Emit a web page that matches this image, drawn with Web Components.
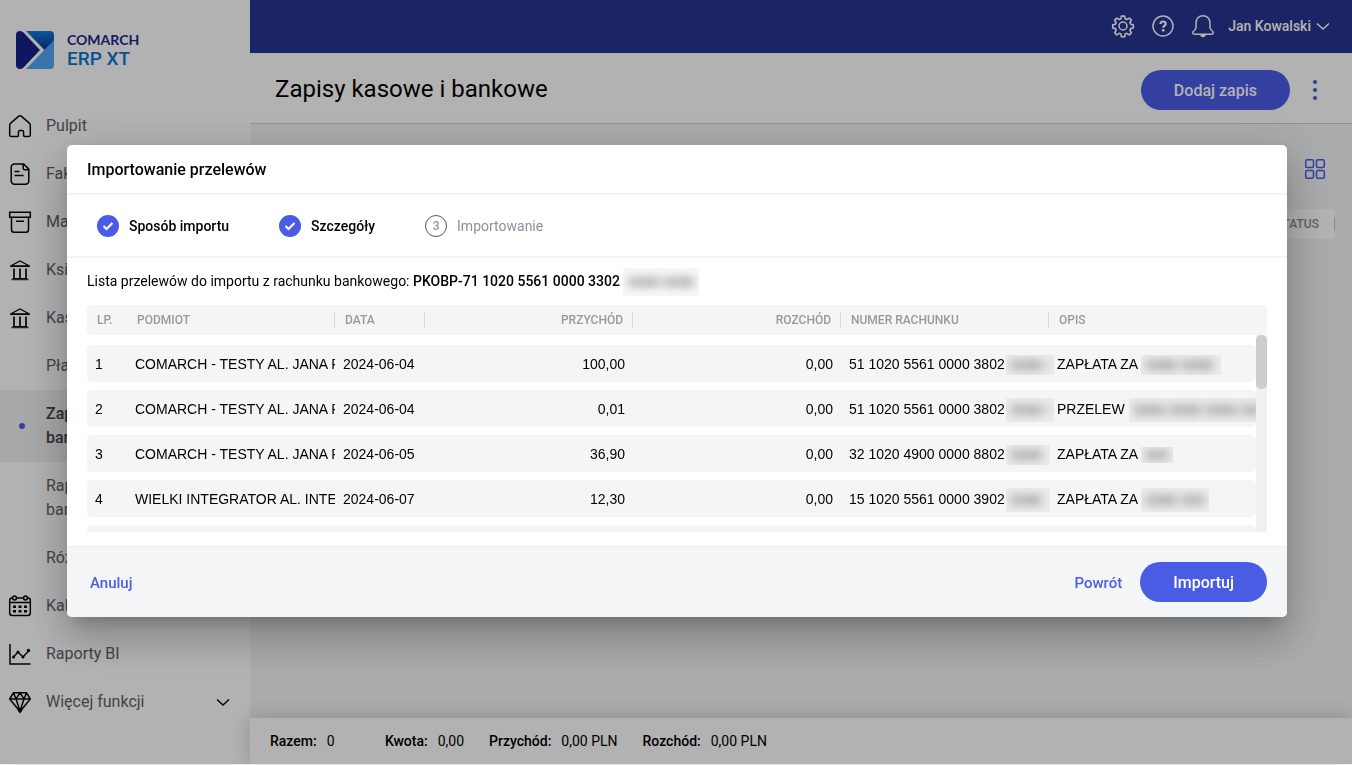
<!DOCTYPE html>
<html lang="pl">
<head>
<meta charset="utf-8">
<meta name="viewport" content="width=device-width, initial-scale=1">
<title>Zapisy kasowe i bankowe</title>
<style>
  body {
    background: #fff;
    color: #000;
    font: 14px/16px Roboto, sans-serif;
    margin: 0;
    padding-bottom: 1px;
  }
</style>
</head>
<body>
<xt-app>
  <xt-sidebar slot="sidebar">
    <xt-nav-item icon="home">Pulpit</xt-nav-item>
    <xt-nav-item icon="invoice">Faktury</xt-nav-item>
    <xt-nav-item icon="box">Magazyn</xt-nav-item>
    <xt-nav-item icon="bank">Księgowość</xt-nav-item>
    <xt-nav-item icon="bank">Kasa/Bank</xt-nav-item>
    <xt-nav-item>Płatności</xt-nav-item>
    <xt-nav-item active>Zapisy kasowe i bankowe</xt-nav-item>
    <xt-nav-item>Raporty kasowe i bankowe</xt-nav-item>
    <xt-nav-item>Różnice kursowe</xt-nav-item>
    <xt-nav-item icon="calendar">Kalendarz</xt-nav-item>
    <xt-nav-item icon="chart">Raporty BI</xt-nav-item>
    <xt-nav-item icon="diamond" expandable>Więcej funkcji</xt-nav-item>
  </xt-sidebar>
  <xt-topbar user="Jan Kowalski"></xt-topbar>
  <xt-page-header>
    Zapisy kasowe i bankowe
    <xt-button slot="actions">Dodaj zapis</xt-button>
  </xt-page-header>
  <xt-list-view></xt-list-view>
  <xt-summary></xt-summary>
</xt-app>

<xt-dialog heading="Importowanie przelewów">
  <xt-step slot="steps" done>Sposób importu</xt-step>
  <xt-step slot="steps" done>Szczegóły</xt-step>
  <xt-step slot="steps" number="3">Importowanie</xt-step>
  <xt-transfers account="PKOBP-71 1020 5561 0000 3302"></xt-transfers>
  <xt-button slot="cancel" kind="link">Anuluj</xt-button>
  <xt-button slot="confirm" kind="link">Powrót</xt-button>
  <xt-button slot="confirm">Importuj</xt-button>
</xt-dialog>

<script>
(function() {
  const ICONS = {
    home: '<path d="M1.700 21V11.200c0-.8.3-1.600 1-2.100l7.500-6.500c1-.9 2.600-.9 3.600 0l7.500 6.500c.7.5 1 1.300 1 2.100V21c0 .9-.7 1.600-1.600 1.600h-4.100c-.6 0-1-.4-1-1v-3.400c0-.9-.7-1.600-1.600-1.600h-2c-.9 0-1.600.7-1.600 1.600v3.400c0 .6-.4 1-1 1H3.300c-.9 0-1.600-.7-1.600-1.600z"/>',
    invoice: '<path d="M6.500 2h9.200l5.100 5.100v11.900a3.300 3.300 0 0 1-3.300 3.300h-11a3.300 3.300 0 0 1-3.300-3.300V5.300A3.300 3.300 0 0 1 6.500 2z"/><path d="M15.200 2v4.200c0 .9.7 1.600 1.600 1.600h4M6.500 9.500h5M6.500 13.500h9"/>',
    box: '<path d="M1.700 2.300h20.600v5H1.700zM3.500 7.300v12.400c0 1.400 1.100 2.500 2.500 2.500h12c1.400 0 2.500-1.100 2.500-2.500V7.300M8 11.200h8"/>',
    bank: '<path d="M2.500 8 12 3l9.500 5z" stroke-width="1.300"/><path d="M2 8.500h20M4.500 20.500h15M3.500 21.700h17" stroke-width="1"/><path d="M6 10.500v9.500M12 10.500v9.500M18 10.500v9.500" stroke-width="1.700"/>',
    calendar: '<rect x="1.700" y="4" width="20.600" height="17.500" rx="2.500"/><path d="M2 8.500h20"/><circle cx="6.500" cy="4" r="1.900" fill="#fff"/><circle cx="17.500" cy="4" r="1.900" fill="#fff"/><path d="M5 12.700h3m2.500 0h3m2.500 0h3M5 17.200h3m2.500 0h3m2.500 0h3" stroke-width="2.600"/>',
    chart: '<path d="M2 2v20h20.500M5.500 15l4.500-5 5 5 5.500-6"/><g fill="currentColor" stroke="none"><circle cx="5.500" cy="15" r="1.500"/><circle cx="10" cy="10" r="1.500"/><circle cx="15" cy="15" r="1.500"/><circle cx="20.500" cy="8.500" r="1.700"/></g>',
    diamond: '<path d="M5.500 2.800h13L22.300 9 12 21.500 1.700 9zM2 9h20M5.500 3 8 8.800l4-6 4 6L18.500 3M8 9l4 12 4-12"/><path d="m10.500 19.500 1.500 2 1.500-2" stroke-width="2.500"/>',
    gear: '<path d="M10.300 1.800h3.400l.7 2.900 1.800.8 2.600-1.600 2.300 2.300-1.600 2.600.8 1.800 2.900.7v3.400l-2.900.7-.8 1.800 1.600 2.600-2.300 2.300-2.600-1.600-1.800.8-.7 2.900h-3.400l-.7-2.900-1.800-.8-2.600 1.600-2.300-2.300 1.600-2.600-.8-1.800-2.900-.7v-3.400l2.900-.7.8-1.800-1.600-2.600 2.300-2.300 2.600 1.600 1.800-.8z" transform="translate(1 .5) scale(.92)" stroke-width="1.800" stroke-linejoin="round"/><circle cx="12" cy="12" r="4"/>',
    help: '<circle cx="12" cy="12" r="10"/><path d="M9.500 10c0-3.300 5.200-3.200 5.200-.3 0 1.900-2.500 1.900-2.500 4" stroke-width="2.200"/><circle cx="12.200" cy="16.300" r="1.400" fill="currentColor" stroke="none"/>',
    bell: '<path d="M12 1.700c-4.200 0-7 3.200-7 7.300v4.500c0 1-.4 1.700-1.300 2.500-1.200 1-2 1.700-2 2.800 0 .9.7 1.400 1.600 1.400h17.400c.9 0 1.600-.5 1.600-1.400 0-1.100-.8-1.800-2-2.800-.9-.8-1.300-1.500-1.300-2.500V9c0-4.100-2.800-7.300-7-7.300z"/><path d="M9.300 20.500h5.400a2.700 2.700 0 0 1-5.400 0z" fill="currentColor" stroke="none"/>',
    chevron: '<path d="m6 9.500 6 5.500 6-5.500"/>',
    more: '<g fill="currentColor" stroke="none"><circle cx="12" cy="4" r="2.100"/><circle cx="12" cy="12" r="2.100"/><circle cx="12" cy="20" r="2.100"/></g>',
    grid: '<rect x="2.700" y="2.700" width="7.800" height="7.800" rx="1.500"/><rect x="13.500" y="2.700" width="7.800" height="7.800" rx="1.500"/><rect x="2.700" y="13.500" width="7.800" height="7.800" rx="1.500"/><rect x="13.500" y="13.500" width="7.800" height="7.800" rx="1.500"/>'
  };

  function icon(name) {
    return `<svg class="icon" width="24" height="24" viewBox="0 0 24 24" fill="none" stroke="currentColor" stroke-width="1.500" aria-hidden="true">${ICONS[name]}</svg>`;
  }

  class XtElement extends HTMLElement {
    connectedCallback() {
      if (this.shadowRoot) {
        return;
      }
      this._root = this.attachShadow({mode: 'open'});
      this._root.innerHTML = `<style>.icon { display: block; flex: none; }</style>` + this.render();
      this.ready();
    }

    ready() {}
  }

  class XtApp extends XtElement {
    render() {
      return `<style>
          :host {
            display: grid;
            grid-template-columns: 250px 1fr;
            min-height: calc(100vh - 1px);
          }
          main {
            background: #f4f5f7;
            display: flex;
            flex-direction: column;
            min-width: 0;
          }
        </style>
        <slot name="sidebar"></slot>
        <main><slot></slot></main>`;
    }
  }

  class XtSidebar extends XtElement {
    render() {
      return `<style>
          :host {
            background: #fff;
            box-shadow: 0 0 20px rgba(0, 0, 0, .2);
            display: block;
          }
          .logo {
            align-items: center;
            box-sizing: border-box;
            display: flex;
            gap: 13px;
            height: 102px;
            padding: 0 16px 2px;
          }
          .logo svg {
            display: block;
          }
          .company {
            color: #1a2a8f;
            display: block;
            font: 700 14px/18px Lato, sans-serif;
          }
          .product {
            color: #0b74d1;
            display: block;
            font-size: 19px;
            font-weight: 500;
            line-height: 20px;
          }
        </style>
        <div class="logo">
          <svg width="38" height="38" viewBox="0 0 38 38" aria-hidden="true">
            <defs>
              <linearGradient id="shade" x1="0" y1="0" x2="0" y2="1">
                <stop offset="0" stop-color="#0b80e0"/>
                <stop offset="1" stop-color="#13308f"/>
              </linearGradient>
            </defs>
            <path d="M10 0h24a4 4 0 0 1 4 4v6L28.500 19z" fill="url(#shade)"/>
            <path d="M38 9v25a4 4 0 0 1-4 4H10z" fill="#50a7f5"/>
            <path d="M0 4a4 4 0 0 1 4-4q2 0 3.500 1.500L24 19 7.500 36.500Q6 38 4 38a4 4 0 0 1-4-4z" fill="#17218b"/>
          </svg>
          <div><span class="company">COMARCH</span><span class="product">ERP XT</span></div>
        </div>
        <nav><slot></slot></nav>`;
    }
  }

  class XtNavItem extends XtElement {
    render() {
      const lead = this.hasAttribute('active') ? '<i class="dot"></i>' :
        this.hasAttribute('icon') ? icon(this.getAttribute('icon')) : '';
      return `<style>
          :host {
            display: block;
          }
          :host([active]) {
            background: #f1f1f1;
            font-weight: 500;
          }
          a {
            align-items: center;
            color: #5f6066;
            display: grid;
            font-size: 16px;
            gap: 14px;
            grid-template-columns: 24px 1fr 24px;
            line-height: 24px;
            padding: 12px 15px 12px 8px;
            text-decoration: none;
          }
          :host([active]) a {
            color: #444;
          }
          .lead, .trail {
            color: #05050f;
          }
          .dot {
            background: #4a5ce4;
            border-radius: 50%;
            display: block;
            height: 6px;
            margin: 0 auto 0 11px;
            width: 6px;
          }
        </style>
        <a href="#">
          <span class="lead">${lead}</span>
          <span><slot></slot></span>
          <span class="trail">${this.hasAttribute('expandable') ? icon('chevron') : ''}</span>
        </a>`;
    }
  }

  class XtTopbar extends XtElement {
    render() {
      return `<style>
          :host {
            align-items: center;
            background: #283593;
            box-sizing: border-box;
            color: #fff;
            display: flex;
            gap: 16px;
            height: 53px;
            justify-content: flex-end;
            padding: 0 17px 2px;
          }
          button {
            align-items: center;
            background: none;
            border: 0;
            color: inherit;
            display: flex;
            font: 500 14px/16px Roboto, sans-serif;
            padding: 0;
          }
          .user {
            margin-left: -3px;
          }
        </style>
        <button aria-label="Ustawienia">${icon('gear')}</button>
        <button aria-label="Pomoc">${icon('help')}</button>
        <button aria-label="Powiadomienia">${icon('bell')}</button>
        <button class="user">${this.getAttribute('user')}${icon('chevron')}</button>`;
    }
  }

  class XtPageHeader extends XtElement {
    render() {
      return `<style>
          :host {
            align-items: center;
            background: #fff;
            border-bottom: 1px solid #d0d1d4;
            display: flex;
            gap: 13px;
            min-height: 66px;
            padding: 4px 25px 0;
          }
          h1 {
            flex: 1;
            font-size: 24px;
            font-weight: 400;
            line-height: 32px;
            margin: 0 0 2px;
          }
          .more {
            background: none;
            border: 0;
            color: #4a5ce4;
            padding: 0;
          }
        </style>
        <h1><slot></slot></h1>
        <slot name="actions"></slot>
        <button class="more" aria-label="Więcej">${icon('more')}</button>`;
    }
  }

  class XtButton extends XtElement {
    render() {
      return `<style>
          :host {
            display: inline-block;
          }
          button {
            background: #4a5ce4;
            border: 0;
            border-radius: 20px;
            color: #fff;
            cursor: pointer;
            display: block;
            font: 500 16px/20px Roboto, sans-serif;
            padding: 11px 33px 9px;
          }
          :host([kind=link]) button {
            background: none;
            color: #4a5ce4;
            font-size: 15px;
            padding: 11px 3px 9px;
          }
        </style>
        <button><slot></slot></button>`;
    }
  }

  class XtListView extends XtElement {
    render() {
      return `<style>
          :host {
            display: block;
            flex: 1;
            padding: 33px 17px 20px 20px;
          }
          .view {
            background: none;
            border: 0;
            color: #4a5ce4;
            display: block;
            margin: 0 8px 0 auto;
            padding: 0;
          }
          .head {
            background: #fff;
            border-radius: 4px;
            color: #8c8c8c;
            font-size: 12px;
            font-weight: 500;
            line-height: 14px;
            margin-top: 28px;
            padding: 8px 0;
            text-align: right;
          }
          .head span {
            border-right: 1px solid #c4c4c4;
            display: block;
            padding-right: 15px;
          }
        </style>
        <button class="view" aria-label="Widok">${icon('grid')}</button>
        <div class="head"><span>STATUS</span></div>`;
    }
  }

  class XtSummary extends XtElement {
    render() {
      const totals = [['Razem:', '0'], ['Kwota:', '0,00'], ['Przychód:', '0,00 PLN'], ['Rozchód:', '0,00 PLN']];
      return `<style>
          :host {
            background: #fff;
            box-shadow: 0 0 20px rgba(0, 0, 0, .2);
            display: block;
            padding: 15px 20px;
            position: relative;
          }
          dl {
            display: flex;
            gap: 25px;
            margin: 0;
          }
          div {
            display: flex;
            gap: 10px;
          }
          div:first-child {
            min-width: 90px;
          }
          dt {
            font-weight: 500;
          }
          dd {
            margin: 0;
          }
        </style>
        <dl>${totals.map(t => `<div><dt>${t[0]}</dt><dd>${t[1]}</dd></div>`).join('')}</dl>`;
    }
  }

  class XtDialog extends XtElement {
    render() {
      return `<style>
          :host {
            align-items: center;
            background: rgba(0, 0, 0, .3);
            box-sizing: border-box;
            display: flex;
            inset: 0 0 1px;
            justify-content: center;
            padding: 0 0 2px 2px;
            position: fixed;
            z-index: 10;
          }
          section {
            background: #fff;
            border-radius: 5px;
            box-shadow: 0 11px 15px -7px rgba(0, 0, 0, .2), 0 24px 38px 3px rgba(0, 0, 0, .14), 0 9px 46px 8px rgba(0, 0, 0, .12);
            max-width: 1220px;
            overflow: hidden;
            width: calc(100% - 120px);
          }
          h2 {
            border-bottom: 2px solid #f1f2f3;
            font-size: 16px;
            font-weight: 500;
            line-height: 20px;
            margin: 0;
            padding: 15px 20px 13px;
          }
          .steps {
            border-bottom: 2px solid #f1f2f3;
            display: flex;
            gap: 50px;
            padding: 20px 30px 19px;
          }
          .body {
            padding: 15px 20px 14px;
          }
          footer {
            align-items: center;
            background: #f4f5f7;
            border-top: 1px solid #ebecee;
            display: flex;
            gap: 15px;
            padding: 15px 20px;
          }
          .space {
            flex: 1;
          }
        </style>
        <section role="dialog" aria-label="${this.getAttribute('heading')}">
          <h2>${this.getAttribute('heading')}</h2>
          <div class="steps"><slot name="steps"></slot></div>
          <div class="body"><slot></slot></div>
          <footer>
            <slot name="cancel"></slot>
            <span class="space"></span>
            <slot name="confirm"></slot>
          </footer>
        </section>`;
    }
  }

  class XtStep extends XtElement {
    render() {
      const mark = this.hasAttribute('done') ?
        '<svg width="22" height="22" viewBox="0 0 22 22" aria-hidden="true"><path d="m6.500 11 3 3 6-6" fill="none" stroke="#fff" stroke-width="2"/></svg>' :
        this.getAttribute('number');
      return `<style>
          :host {
            align-items: center;
            color: #8a929c;
            display: flex;
            gap: 10px;
          }
          :host([done]) {
            color: #000;
            font-weight: 500;
          }
          .mark {
            border: 1px solid #555;
            border-radius: 50%;
            box-sizing: border-box;
            font-size: 12px;
            font-weight: 500;
            height: 22px;
            line-height: 20px;
            text-align: center;
            width: 22px;
          }
          :host([done]) .mark {
            background: #4a5ce4;
            border: 0;
          }
          svg {
            display: block;
          }
        </style>
        <span class="mark">${mark}</span>
        <span><slot></slot></span>`;
    }
  }

  class XtRedacted extends XtElement {
    render() {
      const height = this.getAttribute('height') || 20;
      return `<style>
          :host {
            background: var(--patch, #ebecee);
            display: inline-block;
            height: ${height}px;
            overflow: hidden;
            vertical-align: middle;
            width: ${this.getAttribute('width')}px;
          }
          i {
            background: repeating-linear-gradient(90deg, #999 0 10px, #a8a8a8 10px 14px, #959595 14px 30px, #ddd 30px 36px);
            display: block;
            filter: blur(5px);
            height: 10px;
            margin: ${(height - 10) >> 1}px 5px;
            opacity: .7;
          }
        </style>
        <i></i>`;
    }
  }

  class XtTransfers extends XtElement {
    render() {
      const columns = ['LP.', 'PODMIOT', 'DATA', 'PRZYCHÓD', 'ROZCHÓD', 'NUMER RACHUNKU', 'OPIS'];
      // party, date, income, expense, account, account patch, description, description patch
      const rows = [
        ['COMARCH - TESTY AL. JANA PAWŁA II', '2024-06-04', '100,00', '0,00', '51 1020 5561 0000 3802', [48, 20], 'ZAPŁATA ZA', [80, 20]],
        ['COMARCH - TESTY AL. JANA PAWŁA II', '2024-06-04', '0,01', '0,00', '51 1020 5561 0000 3802', [48, 24], 'PRZELEW', [136, 24]],
        ['COMARCH - TESTY AL. JANA PAWŁA II', '2024-06-05', '36,90', '0,00', '32 1020 4900 0000 8802', [44, 20], 'ZAPŁATA ZA', [32, 16]],
        ['WIELKI INTEGRATOR AL. INTEGRACJI', '2024-06-07', '12,30', '0,00', '15 1020 5561 0000 3902', [44, 24], 'ZAPŁATA ZA', [68, 24]],
        ['COMARCH', '2024-06-07', '10,00', '0,00', '15 1020 5561 0000 3902', [44, 24], 'ZAPŁATA ZA', [68, 24]]
      ];
      const patch = p => `<xt-redacted width="${p[0]}" height="${p[1]}"></xt-redacted>`;
      return `<style>
          :host {
            display: block;
          }
          p {
            margin: 0 0 16px;
          }
          b {
            font-weight: 500;
          }
          p xt-redacted {
            --patch: #f8f8f8;
            margin: -8px 0;
          }
          .scroller {
            position: relative;
          }
          table, thead, tbody {
            display: block;
          }
          tr {
            background: #f4f5f7;
            border-radius: 5px;
            display: grid;
            grid-template-columns: 40px 208px 90px 208px 208px 208px 1fr;
          }
          thead tr {
            align-items: center;
            height: 30px;
          }
          th {
            border-right: 1px solid #d8d9dc;
            color: #999;
            font-size: 12px;
            font-weight: 500;
            padding: 0 10px;
            text-align: left;
          }
          th:first-child, th:last-child {
            border-color: transparent;
          }
          th:nth-child(4), th:nth-child(5),
          td:nth-child(4), td:nth-child(5) {
            text-align: right;
          }
          th:nth-child(4), th:nth-child(5) {
            padding-right: 9px;
          }
          tbody {
            height: 197px;
            overflow: hidden auto;
            padding-right: 11px;
            scrollbar-width: none;
            box-sizing: border-box;
          }
          tbody tr {
            font-family: "Liberation Sans", Arial, sans-serif;
            height: 37px;
            margin-top: 8px;
            overflow: hidden;
          }
          tbody tr:first-child {
            margin-top: 10px;
          }
          td {
            line-height: 38px;
            overflow: hidden;
            padding: 0 8px;
            white-space: nowrap;
          }
          td:nth-child(6) {
            overflow: visible;
          }
          td:nth-child(6) xt-redacted {
            margin-left: 1px;
          }
          .track {
            background: #f1f1f3;
            inset: 30px 0 0 auto;
            position: absolute;
            width: 11px;
          }
          .thumb {
            background: #cdcdcd;
            border-radius: 5px;
            height: 54px;
          }
        </style>
        <p>Lista przelewów do importu z rachunku bankowego: <b>${this.getAttribute('account')}</b> <xt-redacted width="76" height="28"></xt-redacted></p>
        <div class="scroller">
          <table>
            <thead><tr>${columns.map(c => `<th>${c}</th>`).join('')}</tr></thead>
            <tbody>${rows.map((r, i) => `<tr>
              <td>${i + 1}</td><td>${r[0]}</td><td>${r[1]}</td><td>${r[2]}</td><td>${r[3]}</td>
              <td>${r[4]}${patch(r[5])}</td><td>${r[6]} ${patch(r[7])}</td>
            </tr>`).join('')}</tbody>
          </table>
          <div class="track"><div class="thumb"></div></div>
        </div>`;
    }

    ready() {
      const list = this._root.querySelector('tbody');
      const thumb = this._root.querySelector('.thumb');
      list.addEventListener('scroll', () => {
        const ratio = list.scrollTop / (list.scrollHeight - list.clientHeight);
        thumb.style.marginTop = ratio * (list.clientHeight - thumb.offsetHeight) + 'px';
      });
    }
  }

  customElements.define('xt-app', XtApp);
  customElements.define('xt-sidebar', XtSidebar);
  customElements.define('xt-nav-item', XtNavItem);
  customElements.define('xt-topbar', XtTopbar);
  customElements.define('xt-page-header', XtPageHeader);
  customElements.define('xt-button', XtButton);
  customElements.define('xt-list-view', XtListView);
  customElements.define('xt-summary', XtSummary);
  customElements.define('xt-dialog', XtDialog);
  customElements.define('xt-step', XtStep);
  customElements.define('xt-redacted', XtRedacted);
  customElements.define('xt-transfers', XtTransfers);
}());
</script>
</body>
</html>
